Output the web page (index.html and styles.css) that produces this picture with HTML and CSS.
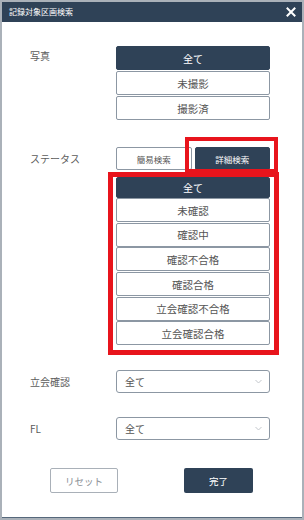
FILE: index.html
```html
<!DOCTYPE html>
<html lang="ja">
<head>
    <meta charset="UTF-8">
    <meta name="viewport" content="width=device-width, initial-scale=1.0">
    <title>記録対象区画検索</title>
    <link rel="stylesheet" href="styles.css">
</head>
<body>
    <div class="screen">
        <div class="dialog">
            <div class="dialog-header">
                <span class="dialog-title">記録対象区画検索</span>
                <svg class="close-icon" width="10" height="10" viewBox="0 0 10 10">
                    <path d="M1.5 1.5 L8.5 8.5 M8.5 1.5 L1.5 8.5" stroke="#fff" stroke-width="2" stroke-linecap="square"/>
                </svg>
            </div>

            <div class="dialog-body">
                <div class="row row-photo">
                    <div class="label">写真</div>
                    <div class="options">
                        <div class="opt selected">全て</div>
                        <div class="opt">未撮影</div>
                        <div class="opt">撮影済</div>
                    </div>
                </div>

                <div class="row row-status">
                    <div class="label">ステータス</div>
                    <div class="options">
                        <div class="toggle">
                            <div class="toggle-btn">簡易検索</div>
                            <div class="toggle-btn active">詳細検索</div>
                        </div>
                        <div class="status-list">
                            <div class="opt selected">全て</div>
                            <div class="opt">未確認</div>
                            <div class="opt">確認中</div>
                            <div class="opt">確認不合格</div>
                            <div class="opt">確認合格</div>
                            <div class="opt">立会確認不合格</div>
                            <div class="opt">立会確認合格</div>
                        </div>
                    </div>
                </div>

                <div class="row row-select first">
                    <div class="label">立会確認</div>
                    <div class="select">
                        <span>全て</span>
                        <svg width="7" height="5" viewBox="0 0 7 5">
                            <polyline points="0.5,1 3.5,4 6.5,1" fill="none" stroke="#c3c7cc" stroke-width="1"/>
                        </svg>
                    </div>
                </div>

                <div class="row row-select">
                    <div class="label">FL</div>
                    <div class="select">
                        <span>全て</span>
                        <svg width="7" height="5" viewBox="0 0 7 5">
                            <polyline points="0.5,1 3.5,4 6.5,1" fill="none" stroke="#c3c7cc" stroke-width="1"/>
                        </svg>
                    </div>
                </div>

                <div class="footer">
                    <div class="btn btn-reset">リセット</div>
                    <div class="btn btn-done">完了</div>
                </div>
            </div>
        </div>

        <!-- 注記の赤枠 -->
        <div class="mark mark-toggle"></div>
        <div class="mark mark-list"></div>
    </div>
</body>
</html>
```

FILE: styles.css
```css
body {
    margin: 0;
    font-family: "Noto Sans CJK JP", "Noto Sans", sans-serif;
    background-color: #fff;
}
.screen {
    position: relative;
    width: 304px;
    height: 520px;
}
.dialog {
    width: 304px;
    height: 520px;
    box-sizing: border-box;
    border: 2px solid #aab1b9;
    background-color: #fff;
    display: flex;
    flex-direction: column;
}
.dialog-header {
    height: 20px;
    background-color: #2f4257;
    display: flex;
    align-items: center;
    justify-content: space-between;
    padding: 0 6px 0 7px;
    flex-shrink: 0;
}
.dialog-title {
    color: #fff;
    font-size: 8px;
    line-height: 1;
}
.close-icon {
    display: block;
}
.dialog-body {
    flex: 1;
    border-bottom: 1px solid #56687b;
    padding: 24px 0 0 28px;
    display: flex;
    flex-direction: column;
}
.row {
    display: flex;
}
.label {
    width: 86px;
    font-size: 10px;
    color: #5c5c5c;
    flex-shrink: 0;
}
.options {
    width: 154px;
    display: flex;
    flex-direction: column;
}
.opt {
    height: 24px;
    box-sizing: border-box;
    border: 1px solid #8c97a3;
    border-radius: 2px;
    background-color: #fff;
    color: #555;
    font-size: 10.5px;
    display: flex;
    align-items: center;
    justify-content: center;
    margin-bottom: 0.7px;
}
.opt.selected {
    background-color: #2f4257;
    border-color: #2f4257;
    color: #fff;
    font-size: 10px;
}
.row-photo .opt {
    height: 24px;
    margin-bottom: 1px;
}
.row-photo .label {
    padding-top: 2px;
}
.row-status {
    margin-top: 26px;
}
.row-status .label {
    padding-top: 4px;
}
.toggle {
    display: flex;
    gap: 3px;
    margin-bottom: 7px;
}
.toggle-btn {
    flex: 1;
    height: 23px;
    box-sizing: border-box;
    border: 1px solid #8c97a3;
    border-radius: 2px;
    color: #555;
    font-size: 8.5px;
    display: flex;
    align-items: center;
    justify-content: center;
}
.toggle-btn.active {
    background-color: #2f4257;
    border-color: #2f4257;
    color: #fff;
}
.status-list .opt.selected {
    height: 21px;
    margin-bottom: 0;
}
.status-list .opt:last-child {
    margin-bottom: 0;
}
.row-select {
    align-items: center;
    margin-top: 24px;
}
.row-select.first {
    margin-top: 25px;
}
.select {
    width: 154px;
    height: 23px;
    box-sizing: border-box;
    border: 1px solid #8c97a3;
    border-radius: 3px;
    display: flex;
    align-items: center;
    justify-content: space-between;
    padding: 0 7px 0 8px;
    font-size: 10px;
    color: #555;
}
.footer {
    display: flex;
    margin-top: 28px;
    padding-left: 20px;
    gap: 66px;
}
.btn {
    width: 68px;
    height: 25px;
    box-sizing: border-box;
    border-radius: 2px;
    font-size: 9.5px;
    display: flex;
    align-items: center;
    justify-content: center;
}
.btn-reset {
    border: 1px solid #a9b0b8;
    color: #8a8f95;
}
.btn-done {
    width: 69px;
    background-color: #2f4257;
    color: #fff;
}
.mark {
    position: absolute;
    box-sizing: border-box;
    border: 4px solid #e8141c;
}
.mark-toggle {
    left: 185px;
    top: 137px;
    width: 93px;
    height: 36px;
}
.mark-list {
    left: 108px;
    top: 172px;
    width: 171px;
    height: 183px;
    border-width: 5px;
}
```
